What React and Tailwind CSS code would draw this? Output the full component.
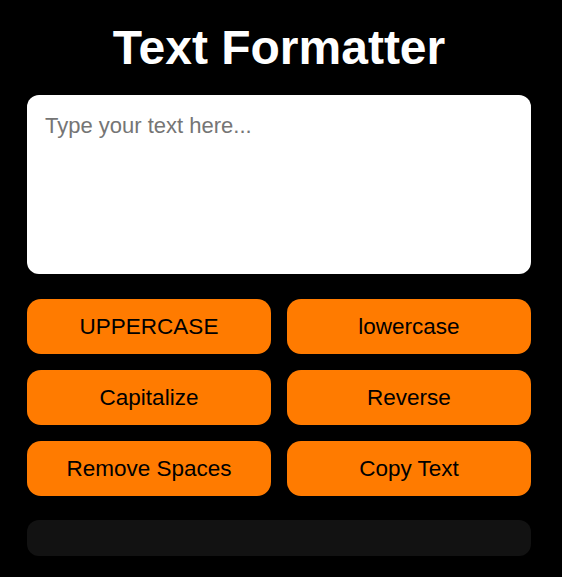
import React, { useState } from "react";

const actions = [
  "UPPERCASE",
  "lowercase",
  "Capitalize",
  "Reverse",
  "Remove Spaces",
  "Copy Text",
];

export default function App() {
  const [text, setText] = useState("");
  const [status, setStatus] = useState("");

  const handleAction = (name) => {
    if (name === "UPPERCASE") setText(text.toUpperCase());
    if (name === "lowercase") setText(text.toLowerCase());
    if (name === "Capitalize")
      setText(text.replace(/\b\w/g, (c) => c.toUpperCase()));
    if (name === "Reverse") setText(text.split("").reverse().join(""));
    if (name === "Remove Spaces") setText(text.replace(/\s+/g, ""));
    if (name === "Copy Text") setStatus("Copied!");
  };

  return (
    <div
      className="min-h-[577px] w-full bg-black pl-[27px] pr-[31px] pt-[24px]"
      style={{ fontFamily: '"Liberation Sans", Arial, sans-serif' }}
    >
      <h1 className="text-center text-[48px] font-bold leading-[48px] text-white">
        Text Formatter
      </h1>

      <textarea
        value={text}
        onChange={(e) => setText(e.target.value)}
        placeholder="Type your text here..."
        className="mt-[23px] block h-[179px] w-full resize-none rounded-[12px] bg-white px-[18px] pt-[14px] text-[22px] text-black outline-none placeholder:text-[#757575]"
      />

      {/* Buttons */}
      <div className="mt-[25px] grid grid-cols-2 gap-x-[16px] gap-y-[16px]">
        {actions.map((name) => (
          <button
            key={name}
            onClick={() => handleAction(name)}
            className="h-[55px] rounded-[14px] bg-[#ff7b00] text-[22.5px] text-black"
          >
            {name}
          </button>
        ))}
      </div>

      <div className="mt-[24px] h-[36px] rounded-[12px] bg-[#121212] px-4 text-[16px] leading-[36px] text-white">
        {status}
      </div>
    </div>
  );
}
